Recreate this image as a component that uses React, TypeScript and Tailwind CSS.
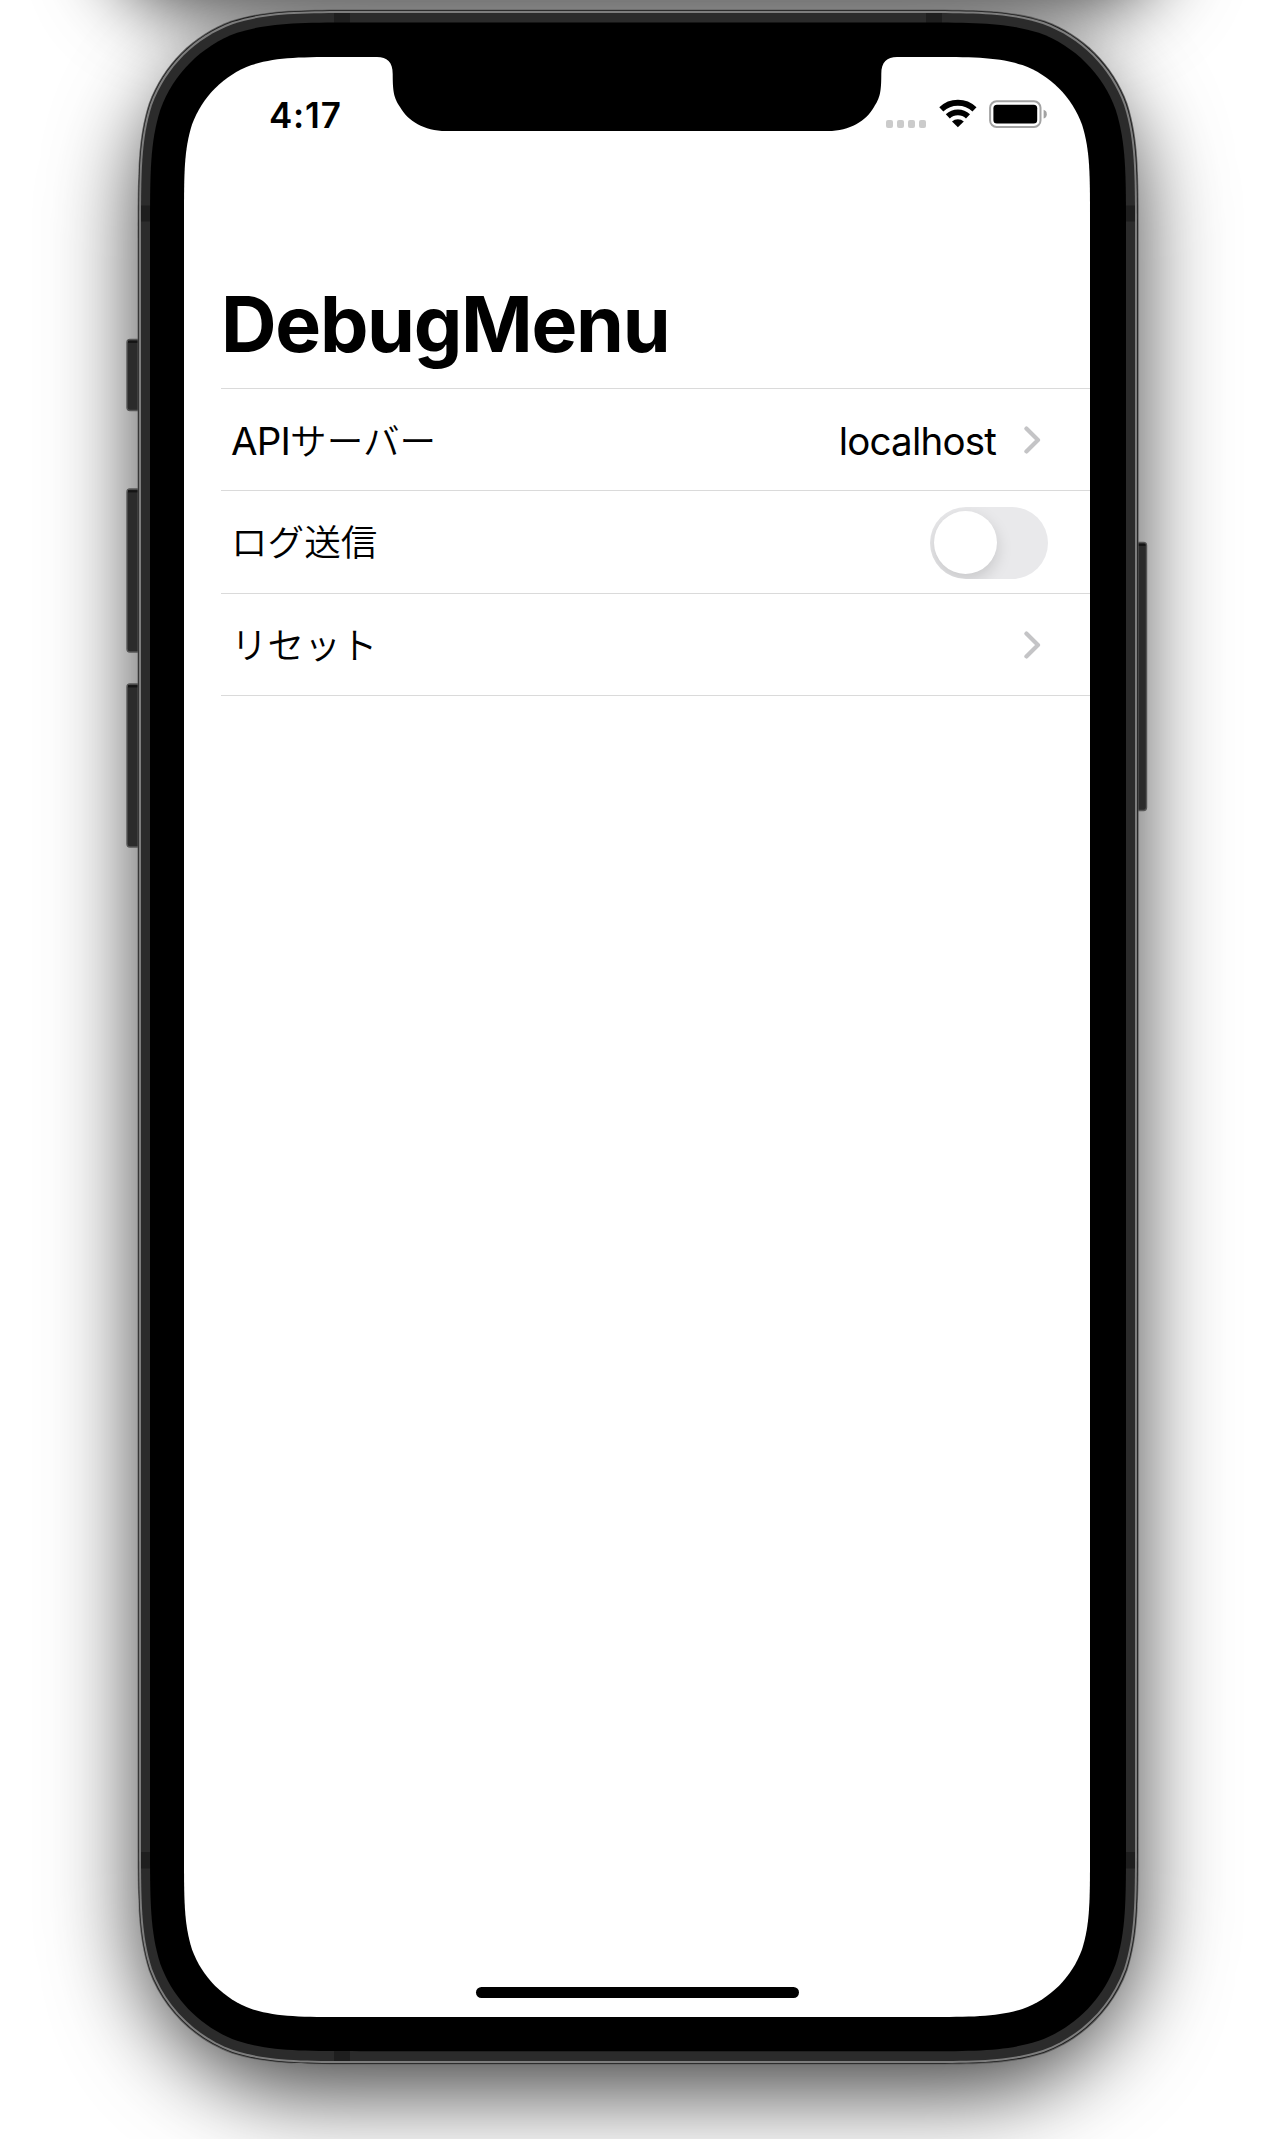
import React from "react";

const SANS = "font-['Inter','Noto_Sans_CJK_JP',sans-serif]";

/** Rounded rectangle with continuous-curvature corners. */
function squircle(x: number, y: number, w: number, h: number, r: number) {
  const a = 1.52866 * r;
  const b = 1.08849 * r;
  const c = 0.86841 * r;
  const d = 0.63149 * r;
  const e = 0.07491 * r;
  const f = 0.37282 * r;
  const g = 0.16906 * r;
  const R = x + w;
  const B = y + h;
  return [
    `M${x + a} ${y}H${R - a}`,
    `C${R - b} ${y} ${R - c} ${y} ${R - d} ${y + e}`,
    `C${R - f} ${y + g} ${R - g} ${y + f} ${R - e} ${y + d}`,
    `C${R} ${y + c} ${R} ${y + b} ${R} ${y + a}V${B - a}`,
    `C${R} ${B - b} ${R} ${B - c} ${R - e} ${B - d}`,
    `C${R - g} ${B - f} ${R - f} ${B - g} ${R - d} ${B - e}`,
    `C${R - c} ${B} ${R - b} ${B} ${R - a} ${B}H${x + a}`,
    `C${x + b} ${B} ${x + c} ${B} ${x + d} ${B - e}`,
    `C${x + f} ${B - g} ${x + g} ${B - f} ${x + e} ${B - d}`,
    `C${x} ${B - c} ${x} ${B - b} ${x} ${B - a}V${y + a}`,
    `C${x} ${y + b} ${x} ${y + c} ${x + e} ${y + d}`,
    `C${x + g} ${y + f} ${x + f} ${y + g} ${x + d} ${y + e}`,
    `C${x + c} ${y} ${x + b} ${y} ${x + a} ${y}Z`,
  ].join("");
}

const sideButtons = [
  { x: 127, y: 339.5, w: 16, h: 71 },
  { x: 127, y: 489, w: 16, h: 163 },
  { x: 127, y: 684, w: 16, h: 163 },
  { x: 1131, y: 542.5, w: 15.5, h: 268 },
];

function PhoneBody() {
  return (
    <svg className="absolute inset-0" width="1274" height="2139" viewBox="0 0 1274 2139" aria-hidden="true">
      {sideButtons.map((b) => (
        <g key={b.y}>
          <rect x={b.x} y={b.y} width={b.w} height={b.h} rx="3" fill="#2b2b2b" stroke="#555" strokeWidth="1.4" />
          <rect x={b.x + 1} y={b.y + 1.2} width={b.w - 2} height="2.2" fill="#141414" />
        </g>
      ))}
      <path d={squircle(137.6, 9.4, 1001, 2055.2, 149)} fill="#5c5c5c" />
      <path d={squircle(138.4, 10.2, 999.4, 2053.6, 148.5)} fill="#1c1c1c" />
      <path d={squircle(139, 11, 998, 2052, 148)} fill="#7d7d7d" />
      <path d={squircle(141, 13, 994, 2048, 146)} fill="#2b2b2b" />
      <g fill="#1e1e1e">
        <rect x="334" y="13" width="16" height="10" />
        <rect x="926" y="13" width="16" height="10" />
        <rect x="334" y="2051" width="16" height="10" />
        <rect x="141" y="205.5" width="10" height="16" />
        <rect x="1125" y="205.5" width="10" height="16" />
        <rect x="141" y="1852" width="10" height="16.5" />
        <rect x="1125" y="1852" width="10" height="16.5" />
      </g>
      <path d={squircle(150, 22.5, 976, 2028.7, 138)} fill="#000" />
      <path d={squircle(184, 57, 906, 1960, 107)} fill="#fff" />
      <path
        d="M372 56V57H377C387 57 392.7 62 392.7 74C392.7 92 394 98 400 107C408 121 424 131 446 131H828C850 131 866 121 874 107C880 98 881.3 92 881.3 74C881.3 62 887 57 897 57V56Z"
        fill="#000"
      />
    </svg>
  );
}

function Shadows() {
  return (
    <div className="absolute inset-0" aria-hidden="true">
      <div className="absolute left-[108px] top-[-1014px] h-[1000px] w-[1058px] rounded-[90px] shadow-[0_26px_78px_rgba(0,0,0,0.72)]" />
      <div className="absolute left-[138px] top-[10px] h-[2054px] w-[1000px] rounded-[172px] shadow-[0_28px_88px_rgba(0,0,0,0.74)]" />
    </div>
  );
}

function StatusBar() {
  return (
    <header className="flex h-[116px] items-start justify-between pl-[85px] pr-[43px] pt-[42px]">
      <time className="mt-[-1px] text-[35px] font-semibold leading-[34px] tracking-[0.8px]">4:17</time>
      <div className="flex">
        <div className="mr-[13px] mt-[21px] flex gap-[3.5px]">
          {[0, 1, 2, 3].map((i) => (
            <span key={i} className="h-[7.5px] w-[7.5px] rounded-[2px] bg-[#cbcbcb]" />
          ))}
        </div>
        <svg className="mr-[12px]" width="38" height="29" viewBox="0 0 38 29">
          <g fill="none" stroke="#000" strokeWidth="5.8">
            <path d="M2.3 10.4A24 24 0 0 1 35.5 10.4" />
            <path d="M8.8 17.4A14.6 14.6 0 0 1 29 17.4" />
          </g>
          <path d="M18.9 28.2L13 22.6A8.6 8.6 0 0 1 24.8 22.6Z" fill="#000" />
        </svg>
        <svg className="mt-[1px]" width="58" height="28" viewBox="0 0 58 28">
          <rect x="1.1" y="1.3" width="50.4" height="25.6" rx="6.5" fill="none" stroke="#a3a3a3" strokeWidth="2" />
          <rect x="4.4" y="4.8" width="43.8" height="18.8" rx="3.5" fill="#000" />
          <path d="M54.6 9.8Q57.8 10.8 57.8 14.2T54.6 18.6Z" fill="#a3a3a3" />
        </svg>
      </div>
    </header>
  );
}

function Chevron() {
  return (
    <svg className="mt-[-1px]" width="17" height="28" viewBox="0 0 17 28" fill="none" stroke="#c4c4c6" strokeWidth="4.2" strokeLinecap="round" strokeLinejoin="round">
      <path d="M2.4 2.6L14 14L2.4 25.4" />
    </svg>
  );
}

function Toggle() {
  return (
    <div className="mr-[-6.5px] flex h-[72px] w-[118px] items-center overflow-hidden rounded-full bg-[#e9e9eb] pl-[4.5px]">
      <div className="h-[63px] w-[63px] rounded-full bg-white shadow-[0_6px_16px_rgba(0,0,0,0.15)]" />
    </div>
  );
}

function Row({ label, children }: { label: React.ReactNode; children: React.ReactNode }) {
  return (
    <li className="flex h-[102.25px] items-center justify-between border-b border-[#dadada] pl-[10px] pr-[49px] pt-[2px]">
      <span className="pt-[1px] text-[36.6px] font-[350] leading-[44px]">{label}</span>
      <div className="flex items-center">{children}</div>
    </li>
  );
}

export default function App() {
  return (
    <div className={`relative h-[2139px] w-[1274px] overflow-hidden bg-white text-black ${SANS}`}>
      <Shadows />
      <PhoneBody />
      <main className="relative ml-[184px] flex h-[2017px] w-[906px] flex-col pt-[57px]">
        <StatusBar />
        <h1 className="mt-[103px] pl-[37px] text-[77px] font-bold leading-[96px] tracking-[-1.3px]">DebugMenu</h1>
        <ul className="ml-[37px] mt-[16px] border-t border-[#dadada]">
          <Row
            label={
              <>
                <span className="text-[38.5px] font-normal tracking-[-0.8px]">API</span>サーバー
              </>
            }
          >
            <span className="mr-[28px] text-[38.5px] leading-[44px] tracking-[-0.8px]">localhost</span>
            <Chevron />
          </Row>
          <Row label="ログ送信">
            <Toggle />
          </Row>
          <Row label="リセット">
            <Chevron />
          </Row>
        </ul>
        <div className="mx-auto mb-[19px] mt-auto h-[11.5px] w-[323px] rounded-full bg-black" />
      </main>
    </div>
  );
}
